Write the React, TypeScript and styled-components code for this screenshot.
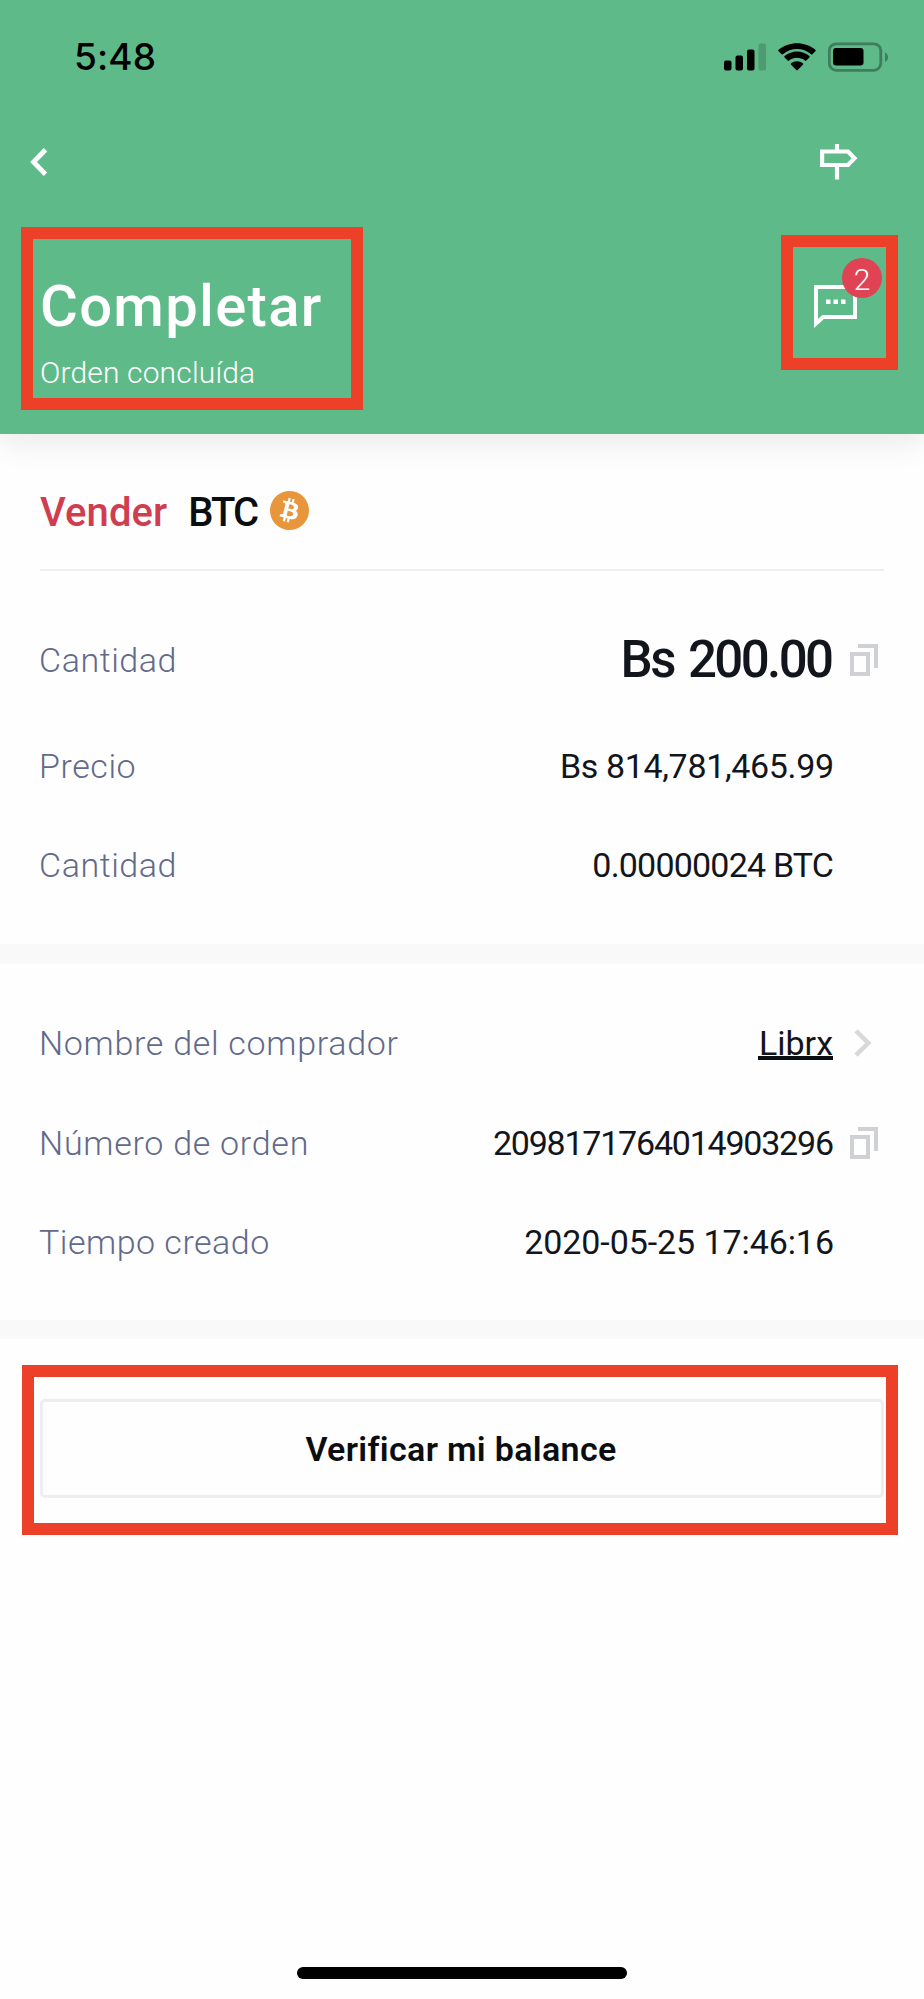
import React from "react";
import styled, { createGlobalStyle } from "styled-components";
import { SiBitcoin } from "react-icons/si";

const GlobalStyle = createGlobalStyle`
  * { box-sizing: border-box; }
  body { margin: 0; background: #fefefe; }
`;

const Screen = styled.div`
  width: 924px;
  height: 1999px;
  display: flex;
  flex-direction: column;
  background: #fefefe;
  color: #12161c;
  font-family: Roboto, "Liberation Sans", sans-serif;
  overflow: hidden;
`;

const Header = styled.header`
  position: relative;
  flex: none;
  height: 434px;
  background: #5fba89;
  box-shadow: 0 8px 30px rgba(20, 25, 30, 0.09);
`;

const StatusBar = styled.div`
  height: 113px;
  padding: 0 36px 0 74px;
  display: flex;
  align-items: center;
  justify-content: space-between;
`;

const Clock = styled.span`
  font: 500 37px/44px Inter, sans-serif;
  letter-spacing: 0.1px;
  color: #000;
`;

const StatusIcons = styled.div`
  display: flex;
  align-items: center;
  gap: 12px;
`;

const NavBar = styled.nav`
  height: 97px;
  padding: 0 66px 0 30px;
  display: flex;
  align-items: center;
  justify-content: space-between;
`;

const TitleRow = styled.div`
  margin-top: 17px;
  padding: 0 26px 0 21px;
  display: flex;
  align-items: flex-start;
  justify-content: space-between;
`;

const Highlight = styled.div`
  border: 12px solid #ec4128;
`;

const TitleBox = styled(Highlight)`
  width: 342px;
  height: 183px;
  padding: 32px 0 0 7px;
  color: #fff;
`;

const Title = styled.h1`
  margin: 0;
  font-size: 58px;
  line-height: 70px;
  font-weight: 500;
  letter-spacing: 1.3px;
`;

const Subtitle = styled.p`
  margin: 12px 0 0;
  font-size: 30px;
  line-height: 40px;
  font-weight: 300;
  letter-spacing: 0.15px;
`;

const ChatBox = styled(Highlight)`
  width: 117px;
  height: 135px;
  margin-top: 8px;
  padding: 38px 0 0 21px;
`;

const ChatButton = styled.div`
  position: relative;
  width: 43px;
  height: 43px;
`;

const Badge = styled.span`
  position: absolute;
  left: 28px;
  top: -27px;
  width: 40px;
  height: 40px;
  border-radius: 50%;
  background: #e04454;
  color: #fff;
  font-size: 30px;
  line-height: 43px;
  font-weight: 300;
  text-align: center;
`;

const Heading = styled.div`
  margin: 0 40px;
  height: 137px;
  padding-top: 55px;
  display: flex;
  align-items: flex-start;
  border-bottom: 2px solid #ededf2;
`;

const Side = styled.span<{ $color: string; $spacing: string }>`
  font-size: 40px;
  line-height: 48px;
  font-weight: 500;
  color: ${(p) => p.$color};
  letter-spacing: ${(p) => p.$spacing};
  & + & { margin-left: 21px; }
`;

const Coin = styled.span`
  width: 39px;
  height: 39px;
  margin: 2px 0 0 13px;
  border-radius: 50%;
  background: radial-gradient(circle, #fff 60%, transparent 61%);
  color: #e8963b;
  display: flex;
`;

const Details = styled.dl<{ $top: number; $bottom: number }>`
  margin: 0;
  padding: ${(p) => p.$top}px 40px ${(p) => p.$bottom}px;
`;

const Row = styled.div<{ $height?: number }>`
  height: ${(p) => p.$height ?? 99.5}px;
  display: grid;
  grid-template-columns: 1fr auto 50px;
  align-items: center;
`;

const Label = styled.dt<{ $spacing?: number }>`
  font-size: 34px;
  line-height: 42px;
  font-weight: 350;
  color: #626a8a;
  letter-spacing: ${(p) => p.$spacing ?? 0.55}px;
  white-space: nowrap;
  margin-left: -1px;
`;

const Value = styled.dd<{ $spacing: number }>`
  margin: 0;
  font-size: 34px;
  line-height: 42px;
  letter-spacing: ${(p) => p.$spacing}px;
  margin-right: ${(p) => -p.$spacing}px;
  white-space: nowrap;
`;

const Amount = styled(Value)`
  font-size: 51px;
  line-height: 60px;
  font-weight: 500;
  word-spacing: 4px;
`;

const BuyerLink = styled.span`
  display: block;
  height: 38px;
  margin-bottom: 5px;
  border-bottom: 4px solid #0b0e11;
  margin-right: 1px;
  padding-left: 1px;
`;

const Action = styled.span<{ $inset: number }>`
  display: flex;
  padding-left: ${(p) => p.$inset}px;
`;

const Band = styled.div`
  height: 19.5px;
  background: #f9f9f9;
`;

const ButtonBox = styled(Highlight)`
  margin: 26px 26px 0 22px;
  height: 170px;
  padding: 22px 2px 0 6px;
`;

const BalanceButton = styled.button`
  display: block;
  width: 100%;
  height: 99px;
  padding: 0 2px 0 0;
  border: 3px solid #ededf2;
  border-radius: 5px;
  background: #fefefe;
  color: #0b0e11;
  font: 600 34px/40px Roboto, sans-serif;
  letter-spacing: 0.33px;
`;

const HomeIndicator = styled.div`
  width: 330px;
  height: 12px;
  margin: auto auto 20px;
  border-radius: 6px;
  background: #000;
`;

const CopyIcon = () => (
  <svg width="28" height="32" viewBox="0 0 28 32" fill="none" stroke="#cfd1d4" strokeWidth="4">
    <path d="M2 10h16v20H2z" />
    <path d="M8 2h18v22" />
  </svg>
);

export default function App() {
  return (
    <Screen>
      <GlobalStyle />
      <Header>
        <StatusBar>
          <Clock>5:48</Clock>
          <StatusIcons>
            <svg width="42" height="28" viewBox="0 0 42 28">
              <rect x="0" y="17.5" width="7.5" height="10" rx="2" />
              <rect x="11.5" y="12.5" width="7.5" height="15" rx="2" />
              <rect x="23" y="6.5" width="7.5" height="21" rx="2" />
              <rect x="34.5" y="0.5" width="7.5" height="27" rx="2" fill="#4e9b71" />
            </svg>
            <svg width="38" height="28" viewBox="0 0 38 28">
              <path d="M0.6 8.2a1 1 0 0 1 0-1.4C11 -2.1 27 -2.1 37.4 6.8a1 1 0 0 1 0 1.4l-2.9 3a1 1 0 0 1-1.4 0C25 4.2 13 4.2 4.9 11.2a1 1 0 0 1-1.4 0z" />
              <path d="M6.6 14.4a1 1 0 0 1 0-1.5c7.1-6 17.7-6 24.8 0a1 1 0 0 1 0 1.5l-3 3.2a1 1 0 0 1-1.4 0c-4.6-3.8-11.4-3.8-16 0a1 1 0 0 1-1.4 0z" />
              <path d="M13.1 21.8a1 1 0 0 1 0-1.5c3.3-2.8 8.5-2.8 11.8 0a1 1 0 0 1 0 1.5l-5.2 5.2a1 1 0 0 1-1.4 0z" />
            </svg>
            <svg width="60" height="30" viewBox="0 0 60 30">
              <rect x="1.3" y="1.8" width="51.5" height="26.5" rx="7" fill="none" stroke="#3f7d5c" strokeWidth="2.8" />
              <rect x="5" y="6" width="30.5" height="17.5" rx="3" />
              <path d="M57 10.5c4 1.5 4 8 0 9.5z" fill="#3f7d5c" />
            </svg>
          </StatusIcons>
        </StatusBar>
        <NavBar>
          <svg width="18" height="28" viewBox="0 0 18 28" fill="none" stroke="#fff" strokeWidth="4.8">
            <path d="M15.5 1.8L3.5 14L15.5 26.2" />
          </svg>
          <svg width="38" height="36" viewBox="0 0 38 36" fill="none" stroke="#fff" strokeWidth="4.2">
            <path d="M2.1 7.5H28L34.5 14.3L28 21H2.1z" />
            <path d="M17 0v6M17 22v13.5" />
          </svg>
        </NavBar>
        <TitleRow>
          <TitleBox>
            <Title>Completar</Title>
            <Subtitle>Orden concluída</Subtitle>
          </TitleBox>
          <ChatBox>
            <ChatButton>
              <svg width="43" height="43" viewBox="0 0 43 43" fill="#fff">
                <path fillRule="evenodd" d="M0 0H43V34H10L0 43zM4 4V34L8.5 30H39V4z" />
                <path d="M12 14.5h4.5v4.5H12zM19.5 14.5H24v4.5h-4.5zM27 14.5h4.5v4.5H27z" />
              </svg>
              <Badge>2</Badge>
            </ChatButton>
          </ChatBox>
        </TitleRow>
      </Header>

      <Heading>
        <Side $color="#cf3e50" $spacing="0.1px">Vender</Side>
        <Side $color="#0b0e11" $spacing="-2px">BTC</Side>
        <Coin><SiBitcoin size={39} /></Coin>
      </Heading>

      <Details $top={33} $bottom={29}>
        <Row $height={112}>
          <Label>Cantidad</Label>
          <Amount $spacing={-2.6}>Bs 200.00</Amount>
          <Action $inset={16}><CopyIcon /></Action>
        </Row>
        <Row>
          <Label>Precio</Label>
          <Value $spacing={-0.35}>Bs 814,781,465.99</Value>
        </Row>
        <Row>
          <Label>Cantidad</Label>
          <Value $spacing={-0.8}>0.00000024 BTC</Value>
        </Row>
      </Details>
      <Band />
      <Details $top={30} $bottom={27.5}>
        <Row>
          <Label $spacing={0.7}>Nombre del comprador</Label>
          <Value $spacing={0}><BuyerLink>Librx</BuyerLink></Value>
          <Action $inset={20}>
            <svg width="18" height="28" viewBox="0 0 18 28" fill="none" stroke="#d7d9db" strokeWidth="4.5">
              <path d="M2 1.8L14.3 14L2 26.2" />
            </svg>
          </Action>
        </Row>
        <Row>
          <Label $spacing={0.73}>Número de orden</Label>
          <Value $spacing={-1.22}>2098171764014903296</Value>
          <Action $inset={16}><CopyIcon /></Action>
        </Row>
        <Row>
          <Label $spacing={0.5}>Tiempo creado</Label>
          <Value $spacing={-0.08}>2020-05-25 17:46:16</Value>
        </Row>
      </Details>
      <Band />

      <ButtonBox>
        <BalanceButton>Verificar mi balance</BalanceButton>
      </ButtonBox>
      <HomeIndicator />
    </Screen>
  );
}
